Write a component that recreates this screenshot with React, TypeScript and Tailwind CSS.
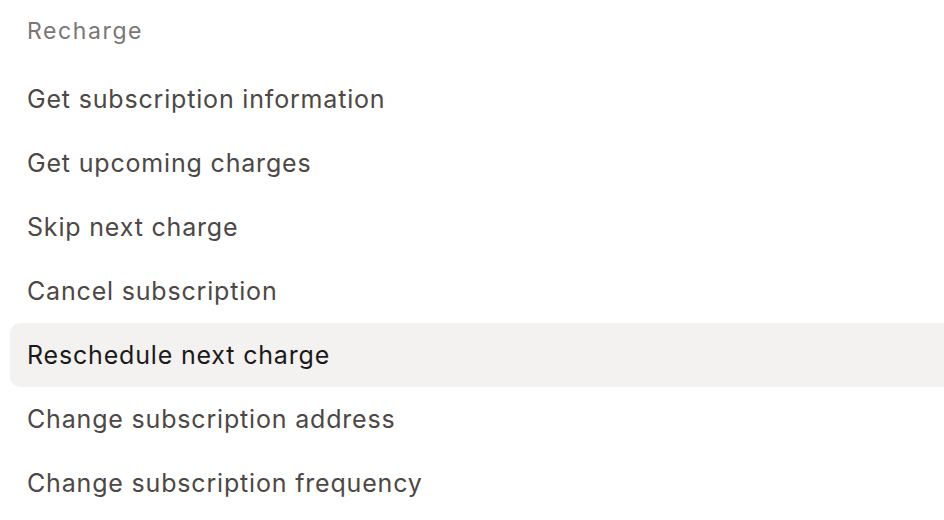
import React from "react";

const items = [
  "Get subscription information",
  "Get upcoming charges",
  "Skip next charge",
  "Cancel subscription",
  "Reschedule next charge",
  "Change subscription address",
  "Change subscription frequency",
];

export default function App() {
  return (
    <div
      className="w-[944px] h-[520px] bg-white overflow-hidden pl-[10px]"
      style={{ fontFamily: "Inter, 'Noto Sans', sans-serif" }}
    >
      <div className="h-[62px] flex items-center pl-[17px] pt-[1px] text-[23px] tracking-[1.6px] text-[#7b7674]">
        Recharge
      </div>
      <div className="pt-[5px] flex flex-col">
        {items.map((t, i) => (
          <div
            key={t}
            className={
              i === 4
                ? "h-[64px] flex items-center pl-[17px] pt-[2px] text-[25px] tracking-[0.82px] text-[#1c1a19] bg-[#f3f2f0] rounded-l-[10px]"
                : "h-[64px] flex items-center pl-[17px] pt-[2px] text-[25px] tracking-[0.82px] text-[#4d4745]"
            }
          >
            {t}
          </div>
        ))}
      </div>
    </div>
  );
}
